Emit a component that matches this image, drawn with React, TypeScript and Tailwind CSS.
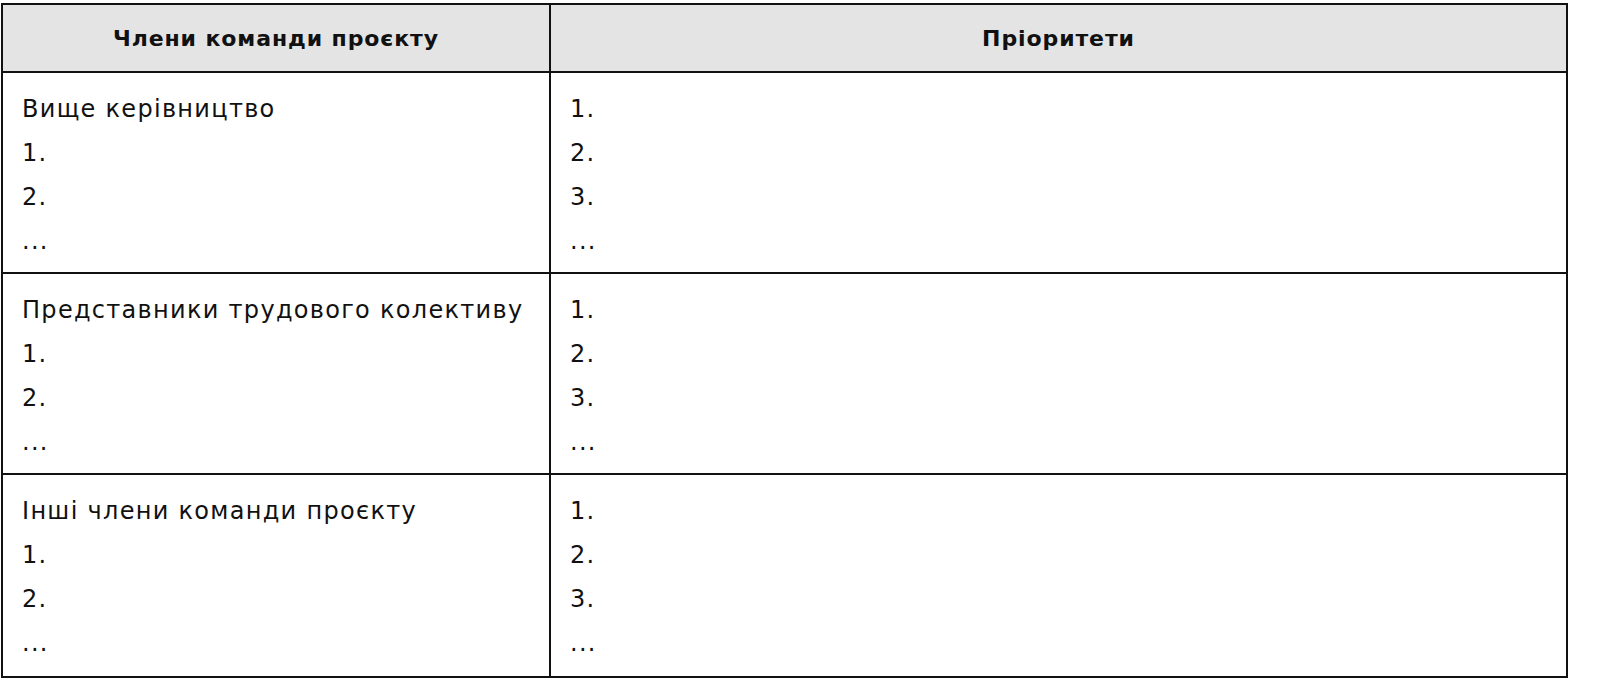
import React from 'react';

const rows = [
  { title: 'Вище керівництво', left: ['1.', '2.', '...'] },
  { title: 'Представники трудового колективу', left: ['1.', '2.', '...'] },
  { title: 'Інші члени команди проєкту', left: ['1.', '2.', '...'] },
];

const priorities = ['1.', '2.', '3.', '...'];

const App = () => {
  return (
    <div
      className="min-h-[692px] w-[1600px] bg-white pl-[1px] pt-[3px] text-[#111]"
      style={{ fontFamily: '"DejaVu Sans", "Noto Sans", sans-serif' }}
    >
      <div className="grid w-[1567px] grid-cols-[548px_1fr] border-2 border-[#111]">
        {/* Header */}
        <div className="flex h-[68px] items-center justify-center border-b-2 border-r-2 border-[#111] bg-[#e4e4e4] text-[22px] font-bold tracking-[0.9px]">
          Члени команди проєкту
        </div>
        <div className="flex h-[68px] items-center justify-center border-b-2 border-[#111] bg-[#e4e4e4] text-[22px] font-bold tracking-[0.9px]">
          Пріоритети
        </div>

        {rows.map((row, i) => (
          <React.Fragment key={row.title}>
            <div
              className={`h-[201px] border-r-2 border-[#111] px-[19px] pt-[14px] text-[24px] leading-[44px] tracking-[1.3px] ${
                i < rows.length - 1 ? 'border-b-2' : ''
              }`}
            >
              <div>{row.title}</div>
              {row.left.map((t, j) => (
                <div key={j}>{t}</div>
              ))}
            </div>
            <div
              className={`h-[201px] border-[#111] px-[19px] pt-[14px] text-[24px] leading-[44px] tracking-[1.3px] ${
                i < rows.length - 1 ? 'border-b-2' : ''
              }`}
            >
              {priorities.map((t, j) => (
                <div key={j}>{t}</div>
              ))}
            </div>
          </React.Fragment>
        ))}
      </div>
    </div>
  );
};

export default App;
